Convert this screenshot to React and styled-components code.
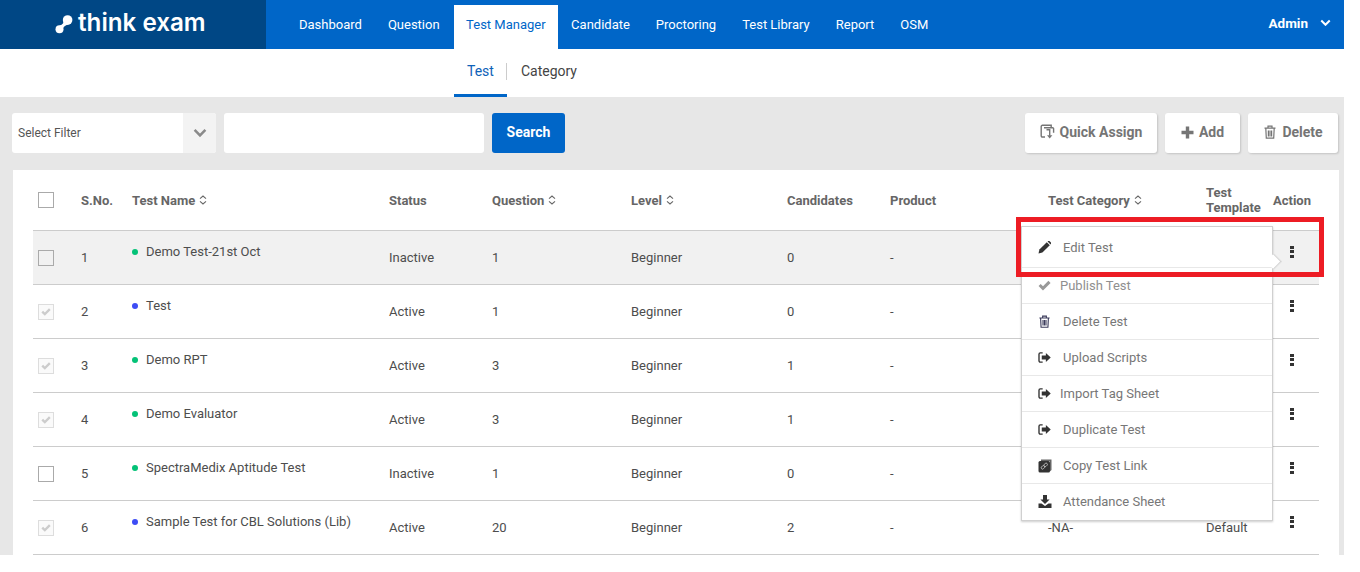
import React from "react";
import styled, { createGlobalStyle } from "styled-components";

const Global = createGlobalStyle`
  html, body { margin: 0; padding: 0; background: #fff; }
  body { font-family: Roboto, "Liberation Sans", sans-serif; font-size: 13px; color: #555; overflow: hidden; }
  * { box-sizing: border-box; }
`;

const Page = styled.div`
  width: 1344px;
  height: 555px;
  overflow: hidden;
  display: flex;
  flex-direction: column;
`;
const Header = styled.header`
  height: 49px;
  flex: none;
  background: #0066c8;
  display: flex;
  align-items: stretch;
`;
const Brand = styled.div`
  width: 266px;
  background: #004785;
  display: flex;
  align-items: center;
  padding-left: 55px;
  gap: 5px;
`;
const BrandText = styled.span`
  font-family: Inter, "Open Sans", sans-serif;
  font-weight: 600;
  font-size: 24.2px;
  letter-spacing: 0;
  color: #fff;
  position: relative;
  top: -2px;
`;
const Nav = styled.nav`
  display: flex;
  align-items: flex-end;
  padding-left: 20px;
  flex: 1;
`;
const NavItem = styled.a`
  height: 44px;
  display: flex;
  align-items: center;
  padding: 0 ${(p) => (p.$active ? "12px" : "13px")} 5px ${(p) => (p.$active ? "12.5px" : "13px")};
  margin: 0 ${(p) => (p.$active ? "0.5px" : "0")} 0 ${(p) => (p.$active ? "1px" : "0")};
  font-size: 13px;
  color: ${(p) => (p.$active ? "#0066c8" : "#fff")};
  background: ${(p) => (p.$active ? "#fff" : "transparent")};
`;
const User = styled.div`
  display: flex;
  align-items: center;
  gap: 12px;
  padding: 0 13px 4px 0;
  color: #fff;
  font-weight: 700;
  font-size: 13.5px;
`;
const SubNav = styled.div`
  height: 48px;
  flex: none;
  padding-left: 454px;
  display: flex;
  align-items: stretch;
  background: #fff;
`;
const SubTab = styled.a`
  display: flex;
  align-items: center;
  padding: 0 ${(p) => (p.$active ? "13px" : "14px")} 2px;
  font-size: 14px;
  position: relative;
  color: ${(p) => (p.$active ? "#0e62b8" : "#444")};
  border-bottom: 3px solid ${(p) => (p.$active ? "#0066c8" : "transparent")};
  ${(p) => p.$active && `
    &::after {
      content: "";
      position: absolute;
      right: 0;
      top: 14px;
      width: 1px;
      height: 17px;
      background: #ccc;
    }
  `}
`;
const Body = styled.main`
  flex: 1;
  background: #e7e7e7;
  padding: 16px 5px 0 12px;
  min-height: 0;
`;
const Toolbar = styled.div`
  display: flex;
  height: 40px;
  gap: 8px;
  margin-right: 1px;
`;
const Select = styled.div`
  width: 204px;
  background: #fff;
  border-radius: 3px;
  display: flex;
  align-items: center;
  justify-content: space-between;
  padding-left: 6px;
  font-size: 12px;
  color: #555;
  overflow: hidden;
`;
const SelectArrow = styled.span`
  width: 33px;
  height: 100%;
  background: #f3f3f3;
  display: flex;
  align-items: center;
  justify-content: center;
`;
const Input = styled.div`
  width: 260px;
  background: #fff;
  border-radius: 3px;
`;
const SearchBtn = styled.button`
  width: 73px;
  border: 0;
  border-radius: 3px;
  background: #0066c8;
  color: #fff;
  font: 700 14px Roboto, sans-serif;
  padding: 0 0 2px;
`;
const Spacer = styled.div`
  flex: 1;
`;
const ActionBtn = styled.button`
  width: ${(p) => p.$w}px;
  border: 0;
  border-radius: 3px;
  background: #fff;
  color: #757575;
  font: 700 14px Roboto, sans-serif;
  display: flex;
  align-items: center;
  justify-content: center;
  gap: ${(p) => p.$gap || 4}px;
  box-shadow: 1px 1px 2px rgba(0, 0, 0, 0.15);
  padding: 0 0 2px;
`;
const Card = styled.section`
  position: relative;
  margin-top: 17px;
  margin-left: 1px;
  background: #fff;
  padding: 0 20px;
  height: 400px;
`;
const columns = "48px 51px 257px 103px 139px 156px 103px 158px 158px 67px 46px";
const HeadRow = styled.div`
  display: grid;
  grid-template-columns: ${columns};
  height: 61px;
  align-items: center;
  border-bottom: 1px solid #ccc;
  font-weight: 700;
  color: #666;
  font-size: 13px;
`;
const HeadCell = styled.div`
  display: flex;
  align-items: center;
  gap: 4px;
  line-height: 15px;
`;
const Row = styled.div`
  display: grid;
  grid-template-columns: ${columns};
  height: 54px;
  align-items: center;
  border-bottom: 1px solid #ccc;
  background: ${(p) => (p.$hover ? "#f1f1f1" : "#fff")};
  position: relative;
`;
const BoxCell = styled.div`
  padding-left: 5px;
  display: flex;
  align-items: center;
`;
const Box = styled.span`
  width: 16px;
  height: 16px;
  background: ${(p) => (p.$disabled ? "#fafafa" : "transparent")};
  border: 1px solid ${(p) => (p.$disabled ? "#ddd" : "#aaa")};
  display: flex;
  align-items: center;
  justify-content: center;
`;
const Cell = styled.div`
  color: #4d4d4d;
  font-size: 13px;
  padding-bottom: 1px;
`;
const NameCell = styled.div`
  display: flex;
  align-items: center;
  gap: 8px;
  color: #4d4d4d;
  position: relative;
  top: -6px;
`;
const Dot = styled.span`
  width: 6px;
  height: 6px;
  border-radius: 50%;
  background: ${(p) => p.$color};
`;
const Kebab = styled.div`
  width: 4px;
  margin-left: 17px;
  display: flex;
  flex-direction: column;
  gap: 1.5px;
  position: relative;
  top: -6px;
  & > i {
    display: block;
    height: 3px;
    background: #333;
  }
`;
const Menu = styled.div`
  position: absolute;
  left: 1008px;
  top: 56px;
  width: 252px;
  background: #fff;
  border: 1px solid #d0d0d0;
  box-shadow: 0 1px 2px rgba(0, 0, 0, 0.2);
  z-index: 2;
  &::after {
    content: "";
    position: absolute;
    right: -9px;
    top: 27px;
    width: 14px;
    height: 14px;
    background: #fff;
    border-top: 1px solid #d0d0d0;
    border-right: 1px solid #d0d0d0;
    transform: rotate(45deg) scale(0.72);
    box-shadow: 1px -1px 0 #ddd;
  }
`;
const MenuItem = styled.div`
  height: ${(p) => (p.$first ? 41 : 36)}px;
  border-bottom: ${(p) => (p.$last ? "0" : "1px solid #e8e8e8")};
  display: flex;
  align-items: center;
  padding: 0 0 ${(p) => (p.$last ? 2 : 0)}px 16px;
  color: ${(p) => (p.$muted ? "#8f8f8f" : "#777")};
  font-size: 13px;
`;
const MenuIcon = styled.span`
  width: ${(p) => p.$w || 25}px;
  display: flex;
  align-items: center;
  flex: none;
`;
const Highlight = styled.div`
  position: absolute;
  left: 1003px;
  top: 47px;
  width: 308px;
  height: 60px;
  border: 5px solid #ed1c24;
  z-index: 3;
  pointer-events: none;
`;

const Sort = () => (
  <svg width="8" height="10" viewBox="0 0 8 10" fill="none" stroke="#666" strokeWidth="1.1">
    <path d="M1 3.6 4 1l3 2.6M1 6.4 4 9l3-2.6" />
  </svg>
);
const Chevron = ({ color, size = 14, sw = 2.6 }) => (
  <svg width={size} height={size * 0.7} viewBox="0 0 14 10" fill="none" stroke={color} strokeWidth={sw}>
    <path d="M1.5 2 7 7.5 12.5 2" />
  </svg>
);
const Tick = ({ c = "#ccc", s = 10 }) => (
  <svg width={s} height={s} viewBox="0 0 12 12" fill={c}>
    <path d="M0.5 6.5 2.5 4.6 4.6 6.7 9.6 1.6 11.6 3.6 4.6 10.6Z" />
  </svg>
);
const Trash = ({ c, s = 14 }) => (
  <svg width={s} height={s} viewBox="0 0 14 14" fill="none" stroke={c} strokeWidth="1.2">
    <path d="M1.5 3.2h11M5 3V1.2h4V3M2.8 3.2l.5 10h7.4l.5-10" />
    <path d="M5.4 5.4v6M7 5.4v6M8.6 5.4v6" />
  </svg>
);
const Pencil = () => (
  <svg width="13" height="13" viewBox="0 0 13 13" fill="#333">
    <path d="M0.5 12.5 1.4 8.6 8.8 1.2 11.8 4.2 4.4 11.6Z" />
    <path d="M9.6 0.5 10.2 0a1 1 0 0 1 1.2 0L13 1.6a1 1 0 0 1 0 1.2L12.5 3.4Z" />
  </svg>
);
const LogOut = () => (
  <svg width="13" height="11" viewBox="0 0 14 12">
    <path d="M5 1H2.4A1.4 1.4 0 0 0 1 2.4v7.2A1.4 1.4 0 0 0 2.4 11H5" fill="none" stroke="#333" strokeWidth="1.5" />
    <path d="M4 3.7h4.5V1L13.8 6 8.5 11V8.3H4Z" fill="#333" />
  </svg>
);
const CopyLink = () => (
  <svg width="14" height="14" viewBox="0 0 14 14">
    <path d="M3 0.5h10.5V11l-1.6 1.5V2H3Z" fill="#666" />
    <rect x="0.5" y="2" width="11.5" height="11.5" rx="1.5" fill="#333" />
    <rect x="3" y="7" width="4" height="2.6" rx="1.3" transform="rotate(-45 5 8.3)" fill="none" stroke="#bbb" strokeWidth="0.9" />
    <rect x="5.6" y="4.6" width="4" height="2.6" rx="1.3" transform="rotate(-45 7.6 5.9)" fill="none" stroke="#bbb" strokeWidth="0.9" />
  </svg>
);
const Save = () => (
  <svg width="14" height="13" viewBox="0 0 14 13" fill="#333">
    <path d="M5 0h4v4.5h2.6L7 9 2.4 4.5H5Z" />
    <path d="M0.5 8.5h3L7 11l3.5-2.5h3V13H.5Z" />
  </svg>
);
const QuickAssign = () => (
  <svg width="16" height="16" viewBox="0 0 16 16" fill="none" stroke="#757575" strokeWidth="1.4">
    <path d="M5 13H2.4A1.2 1.2 0 0 1 1.2 11.8V2.5A1.2 1.2 0 0 1 2.4 1.3h8.8v2.4" />
    <path d="M4 3.7h8.6a1 1 0 0 1 1 1v4" />
    <path d="M6.5 5.8h3.2v6" />
    <path d="M7 11.2h5.4L9.7 14.6Z" fill="#757575" stroke="none" />
  </svg>
);
const Plus = () => (
  <svg width="13" height="13" viewBox="0 0 13 13" fill="#757575">
    <path d="M4.8 0.5h3.4v4.3h4.3v3.4H8.2v4.3H4.8V8.2H.5V4.8h4.3Z" />
  </svg>
);
const Logo = () => (
  <svg width="18" height="19" viewBox="0 0 18 19" fill="#fff">
    <circle cx="12.6" cy="5" r="4.8" />
    <circle cx="4.5" cy="14.3" r="4" />
    <path d="M8.6 6.5C8.5 8.5 7 10 4.5 10.5L8 13.5C8.8 11.5 10.5 10 14 9.5Z" />
  </svg>
);

const green = "#04c277";
const blue = "#3d4cf5";
const rows = [
  { n: 1, name: "Demo Test-21st Oct", dot: green, status: "Inactive", q: 1, c: 0, disabled: false },
  { n: 2, name: "Test", dot: blue, status: "Active", q: 1, c: 0, disabled: true },
  { n: 3, name: "Demo RPT", dot: green, status: "Active", q: 3, c: 1, disabled: true },
  { n: 4, name: "Demo Evaluator", dot: green, status: "Active", q: 3, c: 1, disabled: true },
  { n: 5, name: "SpectraMedix Aptitude Test", dot: green, status: "Inactive", q: 1, c: 0, disabled: false },
  { n: 6, name: "Sample Test for CBL Solutions (Lib)", dot: blue, status: "Active", q: 20, c: 2, disabled: true, category: "-NA-", template: "Default" },
];
const nav = ["Dashboard", "Question", "Test Manager", "Candidate", "Proctoring", "Test Library", "Report", "OSM"];
const menu = [
  { label: "Edit Test", icon: <Pencil /> },
  { label: "Publish Test", icon: <Tick c="#999" s={13} />, muted: true, w: 22 },
  { label: "Delete Test", icon: <Trash c="#3c3c5c" s={13} /> },
  { label: "Upload Scripts", icon: <LogOut /> },
  { label: "Import Tag Sheet", icon: <LogOut />, w: 22 },
  { label: "Duplicate Test", icon: <LogOut /> },
  { label: "Copy Test Link", icon: <CopyLink /> },
  { label: "Attendance Sheet", icon: <Save /> },
];

export default function App() {
  return (
    <>
      <Global />
      <Page>
        <Header>
          <Brand>
            <Logo />
            <BrandText>think exam</BrandText>
          </Brand>
          <Nav>
            {nav.map((n) => (
              <NavItem key={n} $active={n === "Test Manager"}>{n}</NavItem>
            ))}
          </Nav>
          <User>
            Admin
            <Chevron color="#fff" size={11} />
          </User>
        </Header>
        <SubNav>
          <SubTab $active>Test</SubTab>
          <SubTab>Category</SubTab>
        </SubNav>
        <Body>
          <Toolbar>
            <Select>
              Select Filter
              <SelectArrow><Chevron color="#8a8a8a" size={14} /></SelectArrow>
            </Select>
            <Input />
            <SearchBtn>Search</SearchBtn>
            <Spacer />
            <ActionBtn $w={132}><QuickAssign />Quick Assign</ActionBtn>
            <ActionBtn $w={75} $gap={5}><Plus />Add</ActionBtn>
            <ActionBtn $w={90} $gap={5}><Trash c="#757575" />Delete</ActionBtn>
          </Toolbar>
          <Card>
            <HeadRow>
              <BoxCell><Box /></BoxCell>
              <HeadCell>S.No.</HeadCell>
              <HeadCell>Test Name <Sort /></HeadCell>
              <HeadCell>Status</HeadCell>
              <HeadCell>Question <Sort /></HeadCell>
              <HeadCell>Level <Sort /></HeadCell>
              <HeadCell>Candidates</HeadCell>
              <HeadCell>Product</HeadCell>
              <HeadCell>Test Category <Sort /></HeadCell>
              <HeadCell>Test<br />Template</HeadCell>
              <HeadCell>Action</HeadCell>
            </HeadRow>
            {rows.map((r) => (
              <Row key={r.n} $hover={r.n === 1}>
                <BoxCell>
                  <Box $disabled={r.disabled}>{r.disabled && <Tick />}</Box>
                </BoxCell>
                <Cell>{r.n}</Cell>
                <NameCell><Dot $color={r.dot} />{r.name}</NameCell>
                <Cell>{r.status}</Cell>
                <Cell>{r.q}</Cell>
                <Cell>Beginner</Cell>
                <Cell>{r.c}</Cell>
                <Cell>-</Cell>
                <Cell>{r.category}</Cell>
                <Cell>{r.template}</Cell>
                <Kebab><i /><i /><i /></Kebab>
              </Row>
            ))}
            <Menu>
              {menu.map((m, i) => (
                <MenuItem key={m.label} $first={i === 0} $last={i === menu.length - 1} $muted={m.muted}>
                  <MenuIcon $w={m.w}>{m.icon}</MenuIcon>
                  {m.label}
                </MenuItem>
              ))}
            </Menu>
            <Highlight />
          </Card>
        </Body>
      </Page>
    </>
  );
}
